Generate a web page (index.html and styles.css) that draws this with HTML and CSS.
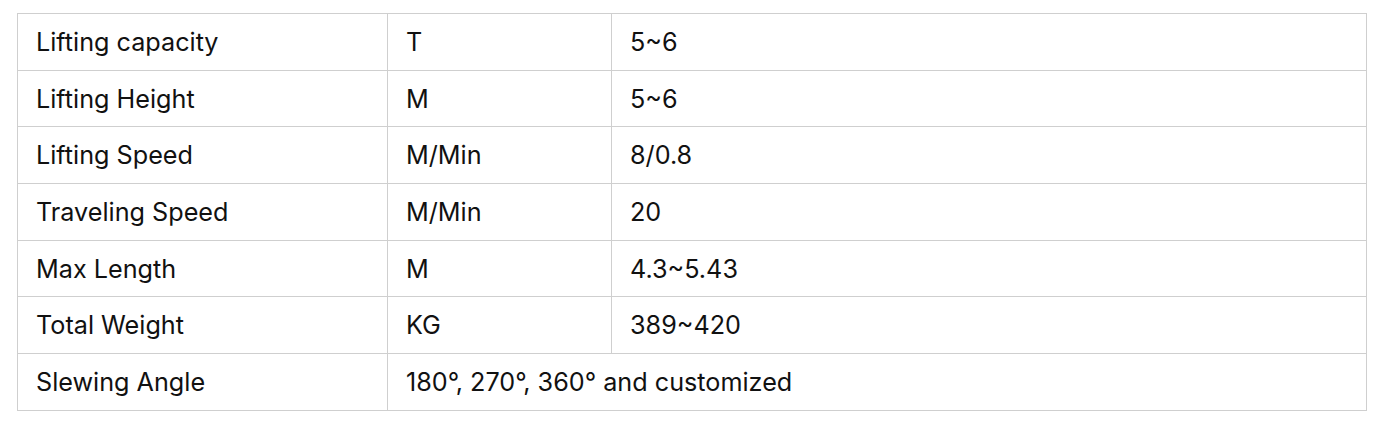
FILE: index.html
```html
<!DOCTYPE html>
<html>
<head>
<meta charset="utf-8">
<link rel="stylesheet" href="styles.css">
</head>
<body>
<div class="wrap">
<table class="spec">
  <colgroup><col class="c1"><col class="c2"><col class="c3"></colgroup>
  <tbody>
    <tr><td>Lifting capacity</td><td>T</td><td>5~6</td></tr>
    <tr><td>Lifting Height</td><td>M</td><td>5~6</td></tr>
    <tr><td>Lifting Speed</td><td>M/Min</td><td>8/0.8</td></tr>
    <tr><td>Traveling Speed</td><td>M/Min</td><td>20</td></tr>
    <tr><td>Max Length</td><td>M</td><td>4.3~5.43</td></tr>
    <tr><td>Total Weight</td><td>KG</td><td>389~420</td></tr>
    <tr><td>Slewing Angle</td><td colspan="2">180°, 270°, 360° and customized</td></tr>
  </tbody>
</table>
</div>
</body>
</html>
```
FILE: styles.css
```css
html, body { margin: 0; padding: 0; background: #fff; }
.wrap { padding: 13px 13px 0 17px; }
.spec {
  width: 1349px;
  border-collapse: collapse;
  table-layout: fixed;
  font-family: Inter, "Noto Sans", sans-serif;
  font-size: 25.2px;
  color: #111;
}
.c1 { width: 370px; }
.c2 { width: 224px; }
.c3 { width: 755px; }
.spec td {
  border: 1px solid #cfcfcf;
  height: 56.7px;
  padding: 0 18px;
  vertical-align: middle;
  box-sizing: border-box;
}
```
